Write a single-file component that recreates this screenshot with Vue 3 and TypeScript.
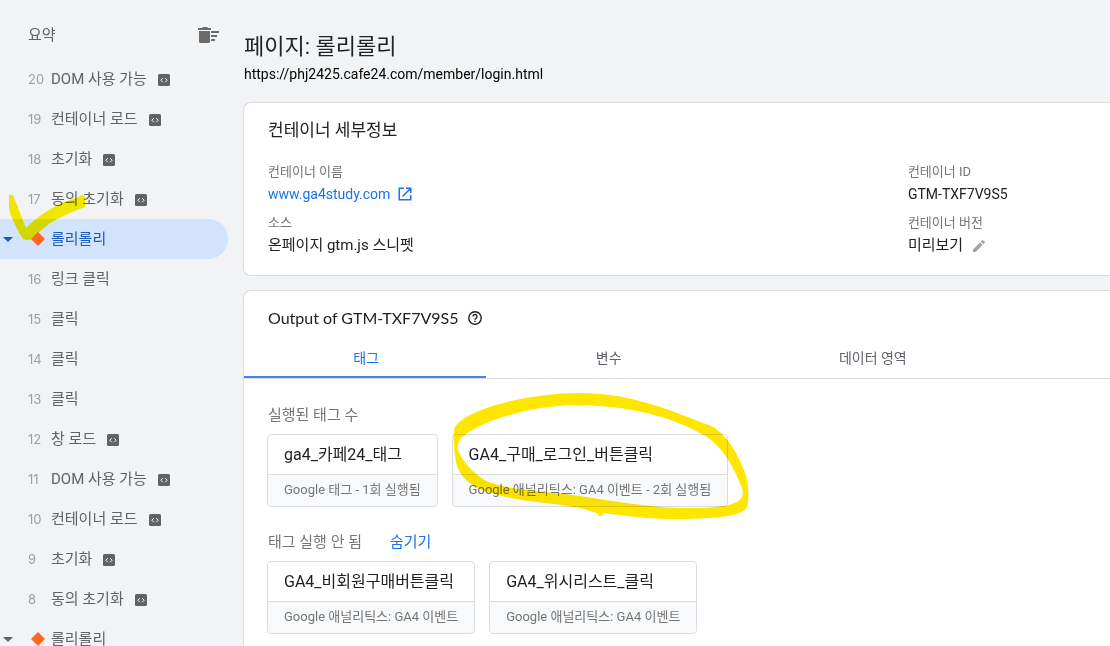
<script setup lang="ts">
import { ref } from 'vue'

interface EventRow {
  id: string
  order?: number
  label: string
  code?: boolean
  page?: boolean
}

interface Tag {
  name: string
  status: string
  marked?: boolean
}

const events: EventRow[] = [
  { id: 'e20', order: 20, label: 'DOM 사용 가능', code: true },
  { id: 'e19', order: 19, label: '컨테이너 로드', code: true },
  { id: 'e18', order: 18, label: '초기화', code: true },
  { id: 'e17', order: 17, label: '동의 초기화', code: true },
  { id: 'p2', label: '롤리롤리', page: true },
  { id: 'e16', order: 16, label: '링크 클릭' },
  { id: 'e15', order: 15, label: '클릭' },
  { id: 'e14', order: 14, label: '클릭' },
  { id: 'e13', order: 13, label: '클릭' },
  { id: 'e12', order: 12, label: '창 로드', code: true },
  { id: 'e11', order: 11, label: 'DOM 사용 가능', code: true },
  { id: 'e10', order: 10, label: '컨테이너 로드', code: true },
  { id: 'e9', order: 9, label: '초기화', code: true },
  { id: 'e8', order: 8, label: '동의 초기화', code: true },
  { id: 'p1', label: '롤리롤리', page: true },
]

const tabs = ['태그', '변수', '데이터 영역']

const fired: Tag[] = [
  { name: 'ga4_카페24_태그', status: 'Google 태그 - 1회 실행됨' },
  { name: 'GA4_구매_로그인_버튼클릭', status: 'Google 애널리틱스: GA4 이벤트 - 2회 실행됨', marked: true },
]

const notFired: Tag[] = [
  { name: 'GA4_비회원구매버튼클릭', status: 'Google 애널리틱스: GA4 이벤트' },
  { name: 'GA4_위시리스트_클릭', status: 'Google 애널리틱스: GA4 이벤트' },
]

const selected = ref('p2')
const activeTab = ref(0)
const showNotFired = ref(true)
</script>

<template>
  <div class="app">
    <nav class="sidebar" aria-label="이벤트">
      <header class="side-head">
        <button class="plain summary" type="button">요약</button>
        <button class="plain clear" type="button" aria-label="지우기">
          <svg width="21" height="18" viewBox="0 0 21 18" fill="#6b6b6b">
            <path d="M0 2h4l1-1h4l1 1h3v2H0zM1 5h11v10.500q0 1.500-1.500 1.500h-8Q1 17 1 15.500zM13 5h8v2h-8zM13 9h6v2h-6zM13 13h4v2h-4z" />
          </svg>
        </button>
      </header>
      <ul class="events">
        <li v-for="row in events" :key="row.id">
          <button
            type="button"
            class="plain event"
            :class="{ selected: row.id === selected }"
            @click="selected = row.id"
          >
            <span class="toggle">
              <svg v-if="row.page" width="10" height="6" viewBox="0 0 10 6"><path d="M0 1h10L5 6z" fill="currentColor" /></svg>
            </span>
            <span class="order">
              <svg v-if="row.page" class="diamond" width="14" height="14" viewBox="0 0 14 14"><path d="M7 0l7 7-7 7-7-7z" fill="#ff6722" /></svg>
              <template v-else>{{ row.order }}</template>
            </span>
            <span>{{ row.label }}</span>
            <svg v-if="row.code" class="code" width="12" height="14" viewBox="0 0 12 14">
              <rect y="2" width="12" height="12" rx="1.500" fill="#5f6368" />
              <path d="M4.800 6.200L2.800 8.200l2 2M7.200 6.200l2 2-2 2" fill="none" stroke="#fff" stroke-width="1" />
            </svg>
            <svg v-if="row.id === 'p2'" class="check-mark" width="78" height="46" viewBox="8 195 78 46" aria-hidden="true">
              <path d="M9 195H13L26 228C41 213 60 202 77 198L82 195 85 197V207C63 215 46 223 32 239Q27 241 23 239C15 226 9 213 9 207Z" fill="#fff200" />
            </svg>
          </button>
        </li>
      </ul>
    </nav>

    <main class="main">
      <header class="page-head">
        <h1>페이지: 롤리롤리</h1>
        <p class="url">https://phj2425.cafe24.com/member/login.html</p>
      </header>

      <section class="card details">
        <h2>컨테이너 세부정보</h2>
        <dl>
          <div>
            <dt>컨테이너 이름</dt>
            <dd>
              <a href="#" class="latin">www.ga4study.com
                <svg width="14" height="14" viewBox="0 0 14 14" fill="none" stroke="currentColor" stroke-width="1.500">
                  <path d="M6 1.250H1.250v11.500h11.500V8M8 1.250h4.750V6M12.500 1.500L4.500 9.500" />
                </svg>
              </a>
            </dd>
          </div>
          <div>
            <dt>컨테이너 ID</dt>
            <dd class="latin">GTM-TXF7V9S5</dd>
          </div>
          <div>
            <dt>소스</dt>
            <dd>온페이지 gtm.js 스니펫</dd>
          </div>
          <div>
            <dt>컨테이너 버전</dt>
            <dd>
              미리보기
              <button class="plain edit" type="button" aria-label="수정">
                <svg width="12" height="12" viewBox="0 0 12 12" fill="#a3a3a3">
                  <path d="M0 9.500L7.100 2.400l2.500 2.500L2.500 12H0zM7.800 1.700L9.200.3q.5-.5 1 0l1.500 1.500q.5.500 0 1l-1.400 1.400z" />
                </svg>
              </button>
            </dd>
          </div>
        </dl>
      </section>

      <section class="card output">
        <h2 class="output-title">
          Output of GTM-TXF7V9S5
          <svg width="14" height="14" viewBox="0 0 14 14" fill="none" stroke="#202124" stroke-width="1.400">
            <circle cx="7" cy="7" r="6.200" />
            <path d="M5 5.500a2 2 0 1 1 3.200 1.600Q7 7.800 7 8.700M7 9.700v1.400" />
          </svg>
        </h2>
        <div class="tabs" role="tablist">
          <button
            v-for="(tab, i) in tabs"
            :key="tab"
            type="button"
            role="tab"
            class="plain tab"
            :class="{ active: i === activeTab }"
            :aria-selected="i === activeTab"
            @click="activeTab = i"
          >{{ tab }}</button>
        </div>

        <div class="groups">
          <h3>실행된 태그 수</h3>
          <div class="tags">
            <button v-for="tag in fired" :key="tag.name" type="button" class="plain tag">
              <span class="name">{{ tag.name }}</span>
              <span class="status">{{ tag.status }}</span>
              <svg v-if="tag.marked" class="circle-mark" width="296" height="128" viewBox="453 392 296 128" aria-hidden="true">
                <path
                  fill="#ffe600"
                  fill-rule="evenodd"
                  d="M454 430C457 413 520 393 580 393C635 393 675 413 709 425C727 433 738 455 743 468C748 478 749 491 748 503C748 514 730 518 687 519C655 520 625 516 603 513L602 516H599L597 513L580 508C550 502 520 502 495 494C468 487 459 475 456 462C454 450 453 440 454 430ZM461 438C480 421 530 405 580 405C632 406 676 418 707 437C725 450 733 466 742 488C747 503 730 507 700 508C660 509 625 503 580 496C545 491 510 491 486 481C470 471 462 460 458 450Q457 442 461 438Z"
                />
              </svg>
            </button>
          </div>

          <h3>
            태그 실행 안 됨
            <button class="plain hide" type="button" @click="showNotFired = !showNotFired">숨기기</button>
          </h3>
          <div v-if="showNotFired" class="tags">
            <button v-for="tag in notFired" :key="tag.name" type="button" class="plain tag">
              <span class="name">{{ tag.name }}</span>
              <span class="status">{{ tag.status }}</span>
            </button>
          </div>
        </div>
      </section>
    </main>
  </div>
</template>

<style>
body {
  background: #f1f3f4;
}
</style>

<style scoped>
.app {
  display: flex;
  gap: 15px;
  height: 100vh;
  overflow: hidden;
  background: #f1f3f4;
  color: #202124;
  font-family: Roboto, "Noto Sans CJK KR", sans-serif;
  font-size: 15px;
  font-weight: 400;
  line-height: 24px;
}

h1, h2, h3, p, dl, dd, ul {
  margin: 0;
  padding: 0;
  font-weight: inherit;
}

.plain {
  padding: 0;
  border: 0;
  background: none;
  color: inherit;
  font: inherit;
  text-align: left;
  cursor: pointer;
}

.sidebar {
  flex: 0 0 228px;
  color: #5f6368;
}

.side-head {
  display: flex;
  align-items: center;
  justify-content: space-between;
  height: 48px;
  padding: 11px 9px 0 28px;
}

.clear {
  display: flex;
}

.events {
  list-style: none;
}

.event {
  position: relative;
  display: flex;
  align-items: center;
  width: 100%;
  height: 40px;
  border-radius: 0 20px 20px 0;
}

.event.selected {
  background: #d2e3fc;
  color: #185abc;
}

.toggle {
  display: flex;
  width: 25px;
  padding-left: 3px;
}

.order {
  display: flex;
  width: 23px;
  color: #9aa0a6;
  font-family: Inter, sans-serif;
  font-size: 13px;
}

.diamond {
  margin-left: 3px;
}

.code {
  margin-left: 11px;
}

.check-mark {
  position: absolute;
  left: 8px;
  top: -24px;
  mix-blend-mode: multiply;
  pointer-events: none;
}

.main {
  flex: 1;
  min-width: 0;
  padding-top: 32px;
}

.page-head {
  padding-left: 1px;
}

h1 {
  font-size: 22px;
  line-height: 30px;
}

.url {
  color: #000;
  font-size: 14px;
}

.card {
  border: 1px solid #dadce0;
  border-right: 0;
  border-radius: 8px 0 0 8px;
  background: #fff;
}

.details {
  margin-top: 16px;
  padding: 15px 0 18px 24px;
}

h2 {
  font-size: 17px;
}

dl {
  display: grid;
  grid-template-columns: 76% 24%;
  row-gap: 7px;
  margin-top: 20px;
}

dt {
  color: #757575;
  font-size: 13px;
  line-height: 20px;
}

.latin {
  font-size: 14px;
}

a {
  display: inline-flex;
  align-items: center;
  gap: 8px;
  color: #1a73e8;
  text-decoration: none;
}

.edit {
  margin-left: 6px;
  vertical-align: -2px;
  line-height: 12px;
}

.edit svg {
  display: block;
}

.output {
  margin-top: 14px;
  min-height: 400px;
}

.output-title {
  display: flex;
  align-items: center;
  gap: 9px;
  padding: 15px 24px 8px;
  font-family: Lato, sans-serif;
  font-size: 16px;
}

.tabs {
  display: flex;
  border-bottom: 1px solid #dadce0;
}

.tab {
  flex: 0 0 28%;
  height: 40px;
  padding: 2px 0 0 2px;
  border-bottom: 2px solid transparent;
  color: #5f6368;
  font-size: 14px;
  text-align: center;
}

.tab:last-child {
  flex-basis: 33%;
}

.tab.active {
  border-color: #4285f4;
  color: #1a73e8;
}

.groups {
  padding: 24px 23px;
}

h3 {
  display: flex;
  gap: 28px;
  padding-left: 1px;
  color: #757575;
  font-size: 15px;
}

.hide {
  color: #1a73e8;
}

.tags {
  display: flex;
  gap: 14px;
  margin: 7px 0 23px;
}

.tag {
  position: relative;
  border: 1px solid #dadce0;
  border-radius: 4px;
  white-space: nowrap;
}

.name,
.status {
  display: block;
  padding: 0 16px;
}

.name {
  font-size: 16px;
  line-height: 39px;
}

.status {
  padding-bottom: 2px;
  border-top: 1px solid #dadce0;
  border-radius: 0 0 4px 4px;
  background: #f8f9fa;
  color: #757575;
  font-size: 13px;
  line-height: 29px;
}

.circle-mark {
  position: absolute;
  left: 0;
  top: -43px;
  mix-blend-mode: multiply;
  pointer-events: none;
}
</style>
